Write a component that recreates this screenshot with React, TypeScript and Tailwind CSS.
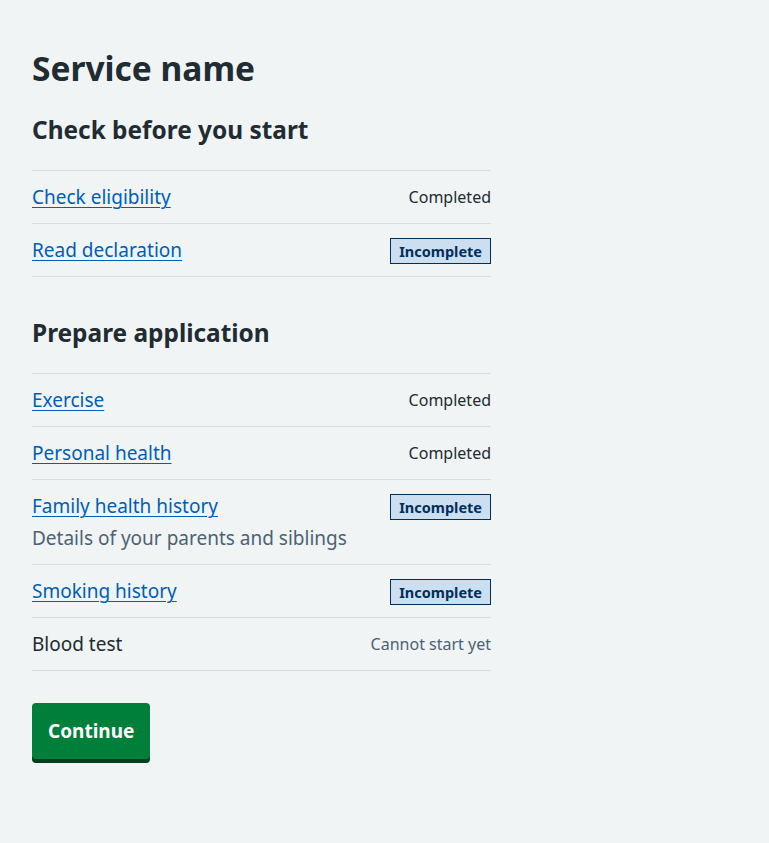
type Status = 'completed' | 'incomplete' | 'cannot'

type Task = {
  name: string
  href?: string
  hint?: string
  status: Status
}

const sections: { title: string; tasks: Task[] }[] = [
  {
    title: 'Check before you start',
    tasks: [
      { name: 'Check eligibility', href: '#', status: 'completed' },
      { name: 'Read declaration', href: '#', status: 'incomplete' },
    ],
  },
  {
    title: 'Prepare application',
    tasks: [
      { name: 'Exercise', href: '#', status: 'completed' },
      { name: 'Personal health', href: '#', status: 'completed' },
      {
        name: 'Family health history',
        href: '#',
        hint: 'Details of your parents and siblings',
        status: 'incomplete',
      },
      { name: 'Smoking history', href: '#', status: 'incomplete' },
      { name: 'Blood test', status: 'cannot' },
    ],
  },
]

function TaskStatus({ status }: { status: Status }) {
  if (status === 'incomplete') {
    return (
      <strong className="mt-[2px] border border-[#002f5c] bg-[#ccdff1] px-2 py-1 text-[14.5px] font-bold leading-4 text-[#002f5c]">
        Incomplete
      </strong>
    )
  }
  if (status === 'cannot') {
    return <span className="text-[16px] leading-7 text-[#4c6272]">Cannot start yet</span>
  }
  return <span className="text-[16px] leading-7 text-[#212b32]">Completed</span>
}

function TaskRow({ task }: { task: Task }) {
  return (
    <li className="flex items-start justify-between gap-4 border-b border-[#d8dde0] py-3">
      <div className="flex flex-col">
        {task.href ? (
          <a
            href={task.href}
            className="text-[19px] leading-7 text-[#005eb8] underline decoration-1 underline-offset-[3px]"
          >
            {task.name}
          </a>
        ) : (
          <span className="text-[19px] leading-7 text-[#212b32]">{task.name}</span>
        )}
        {task.hint && <p className="mt-1 text-[19px] leading-7 text-[#4c6272]">{task.hint}</p>}
      </div>
      <TaskStatus status={task.status} />
    </li>
  )
}

export default function App() {
  return (
    <div
      className="min-h-screen w-full bg-[#f0f4f5] px-8 pt-12 text-[#212b32]"
      style={{ fontFamily: '"Noto Sans", "Open Sans", Arial, sans-serif' }}
    >
      <div className="w-[459px]">
        <h1 className="mb-[26px] text-[33.5px] font-bold leading-10">Service name</h1>
        {sections.map((section) => (
          <section key={section.title} className="mb-10">
            <h2 className="mb-6 text-[24.4px] font-bold leading-8">{section.title}</h2>
            <ul className="border-t border-[#d8dde0]">
              {section.tasks.map((task) => (
                <TaskRow key={task.name} task={task} />
              ))}
            </ul>
          </section>
        ))}
        <button
          type="button"
          className="-mt-[8px] h-[56px] rounded bg-[#007f3b] px-4 text-[19px] font-bold leading-7 text-white shadow-[0_4px_0_#00401e]"
        >
          Continue
        </button>
      </div>
    </div>
  )
}
